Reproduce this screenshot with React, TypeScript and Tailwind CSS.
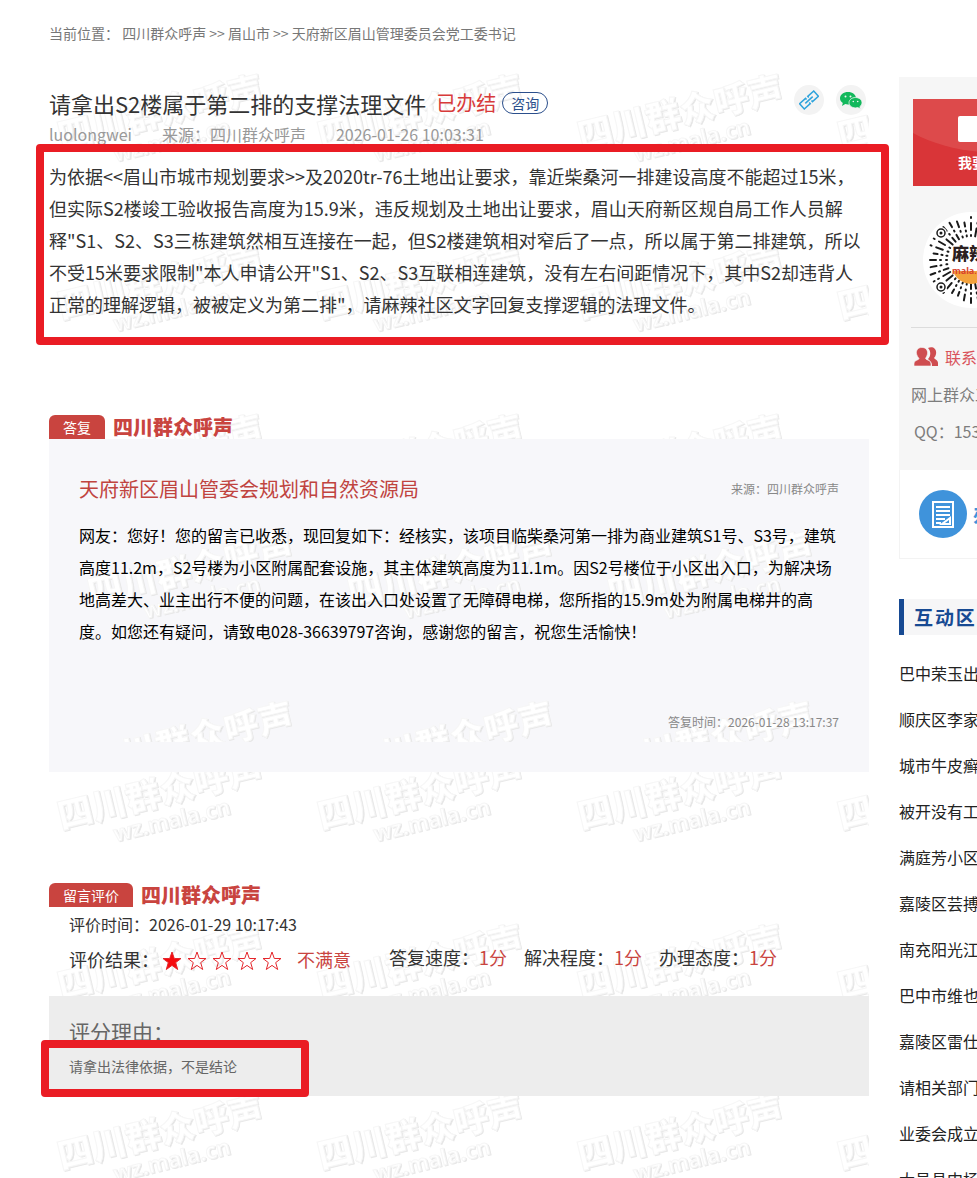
import { useId } from "react";

const TOPICS = [
  "巴中荣玉出",
  "顺庆区李家",
  "城市牛皮癣",
  "被开没有工",
  "满庭芳小区",
  "嘉陵区芸搏",
  "南充阳光江",
  "巴中市维也",
  "嘉陵区雷仕",
  "请相关部门",
  "业委会成立",
  "大邑县中杨",
];

const SCORES = [
  { label: "答复速度：", value: "1分" },
  { label: "解决程度：", value: "1分" },
  { label: "办理态度：", value: "1分" },
];

const STAR = "M10 1l2.300 6.500h6.700l-5.300 4.100 2 6.900-5.700-4.100-5.700 4.100 2-6.900L1 7.500h6.700z";

function Watermark() {
  const id = useId();
  const word = (fill: string, stroke: string) => (
    <g fill={fill} stroke={stroke}>
      <text x="0" y="0" fontSize="35" fontWeight="900">
        四川群众呼声
      </text>
      <text x="50" y="25" fontSize="22" fontWeight="600" fontFamily="Noto Sans">
        wz.mala.cn
      </text>
    </g>
  );

  return (
    <svg className="pointer-events-none absolute inset-0 h-full w-full" aria-hidden="true">
      <defs>
        <pattern id={id} width="260" height="170" patternUnits="userSpaceOnUse">
          <g transform="translate(12 87) rotate(-13.5)" strokeWidth="1">
            <g transform="translate(1 1)">{word("#dcdcdc", "#e8e8e8")}</g>
            {word("#fff", "#f6f6f6")}
          </g>
        </pattern>
      </defs>
      <rect width="100%" height="100%" fill={`url(#${id})`} />
    </svg>
  );
}

function SectionTab({ title }: { title: string }) {
  return (
    <div className="flex items-center gap-2">
      <h2 className="rounded-t-md bg-[#c9443f] px-3.5 text-sm leading-6 text-white">{title}</h2>
      <span className="text-xl leading-6 font-black text-[#c9443f]">四川群众呼声</span>
    </div>
  );
}

function Stars({ score }: { score: number }) {
  return (
    <div className="flex gap-[5px]" role="img" aria-label={`${score} / 5`}>
      {[1, 2, 3, 4, 5].map((n) => (
        <svg key={n} viewBox="0 0 20 20" className="h-5 w-5">
          <path d={STAR} fill={n <= score ? "#f5090c" : "none"} stroke="#e5262b" strokeWidth="1" />
        </svg>
      ))}
    </div>
  );
}

// round mini-program code: rays of short dashes around the logo
function RoundCode() {
  const rays = Array.from({ length: 36 }, (_, i) => i);
  const dashes = ["1 5 7 5 1 9", "5 4 1 4 9 9", "1 4 1 4 4 9", "8 5 1 4 1 9", "1 5 1 4 6 9"];
  return (
    <svg viewBox="0 0 96 96" className="h-24 w-24" role="img" aria-label="麻辣社区">
      <circle cx="48" cy="48" r="48" fill="#fff" />
      <g stroke="#1a1a1a" strokeWidth="2" strokeLinecap="round">
        {rays.map((i) => (
          <line
            key={i}
            x1="48"
            y1="24"
            x2="48"
            y2="5"
            strokeDasharray={dashes[(i * 7 + (i % 3)) % 5]}
            transform={`rotate(${i * 10} 48 48)`}
          />
        ))}
      </g>
      {[
        [18, 21],
        [18, 75],
        [78, 21],
      ].map(([x, y]) => (
        <g key={`${x}-${y}`}>
          <circle cx={x} cy={y} r="6" fill="#fff" />
          <circle cx={x} cy={y} r="4" fill="none" stroke="#1a1a1a" strokeWidth="1.5" />
          <circle cx={x} cy={y} r="1.500" fill="#1a1a1a" />
        </g>
      ))}
      <circle cx="48" cy="48" r="21" fill="#fff" />
      <path d="M30 59h36a19 19 0 0 1-36 0z" fill="#f3a23c" />
      <text x="29" y="48" fontSize="17" fontWeight="900" fill="#2b2020">
        麻辣
      </text>
      <text x="29" y="62" fontSize="9" fontWeight="700" fontFamily="Noto Sans" fill="#d8432f">
        mala.cn
      </text>
    </svg>
  );
}

function WechatIcon() {
  return (
    <svg viewBox="0 0 24 20" className="h-5 w-6" aria-hidden="true">
      <path d="M9 2c4.500 0 8 2.700 8 6.200S13.500 14.500 9 14.500c-1 0-1.900-.1-2.700-.4L3 16l.8-3C2.100 11.900 1 10.200 1 8.200 1 4.700 4.600 2 9 2z" fill="#12b85c" />
      <path d="M16.500 7.500c3.700 0 6.500 2.300 6.500 5.200 0 1.600-.9 3-2.200 4l.6 2.300-2.500-1.400c-.8.2-1.600.3-2.400.3-3.700 0-6.500-2.300-6.500-5.200s2.800-5.200 6.500-5.200z" fill="#12b85c" stroke="#f3f3f3" strokeWidth=".8" />
      <g fill="#f3f3f3">
        <circle cx="6.500" cy="6.500" r="1" />
        <circle cx="11.500" cy="6.500" r="1" />
        <circle cx="14.300" cy="11.500" r=".8" />
        <circle cx="18.700" cy="11.500" r=".8" />
      </g>
    </svg>
  );
}

function Sidebar() {
  return (
    <aside className="w-[78px] flex-none overflow-hidden pt-[15px] whitespace-nowrap">
      <div className="h-[393px] bg-[#f6f6f6] pt-[22px]">
        <a href="#write" className="relative ml-3.5 block h-[87px] w-[140px] overflow-hidden bg-[#d93538] text-white">
          <svg viewBox="0 0 140 87" className="absolute inset-0 h-full w-full" aria-hidden="true">
            <path d="M0 0h140v48C95 58 40 56 0 34z" fill="#dd4a4b" />
            <rect x="45" y="17" width="50" height="26" rx="2" fill="#fff" />
          </svg>
          <span className="relative block pt-[53px] pl-[45px] text-sm leading-5 font-bold">我要留言</span>
        </a>
        <div className="mt-[26px] ml-6 w-24">
          <RoundCode />
        </div>
        <div className="mt-[19px] ml-3 border-t border-[#dcdcdc] pt-[17px]">
          <h3 className="flex items-center gap-[7px] pl-[3px] leading-6 text-[#d9535a]">
            <svg viewBox="0 0 24 20" className="h-5 w-6 flex-none" fill="#cf4d50" aria-hidden="true">
              <path d="M14 1c5-2 9 1 8 6-.3 2-1.300 3-2 4 1 1.500 4 2 4 5v3h-6c0-4-2-5-4-7 3-3 3-8 0-11z" />
              <path
                d="M8 .5c4 0 6 3 5.500 6.500C13.200 9 12 10 11.500 11.500c1 2 5.500 1.500 5.500 5.500v2H0v-2c0-4 4.500-3.500 5-5.500C4 10 3 9 2.500 7 2 3 4 .500 8 .500z"
                stroke="#f6f6f6"
                strokeWidth=".6"
              />
            </svg>
            联系我们
          </h3>
          <p className="mt-[13px] leading-6 text-[#7d7d7d]">网上群众工作</p>
          <p className="mt-[13px] pl-[3px] leading-6 text-[#7d7d7d]">QQ：1534</p>
        </div>
      </div>
      <a href="#guide" className="flex h-[89px] items-center gap-1.5 border-b border-l border-[#f3f3f3] pl-[19px] text-xl font-bold text-[#3f93db]">
        <svg viewBox="0 0 48 48" className="h-12 w-12 flex-none" aria-hidden="true">
          <circle cx="24" cy="24" r="24" fill="#3f93db" />
          <g fill="none" stroke="#fff" strokeWidth="2">
            <path d="M14 12h20v25H14z" />
            <path d="M17 17h14M17 21h14M17 25h14M17 29h9M17 33h5M31 28l-8 6h8z" />
          </g>
        </svg>
        办事
      </a>
      <h2 className="mt-10 border-l-[5px] border-[#174a93] bg-[#f6f6f7] pl-2.5 text-[19px] leading-9 font-bold tracking-widest text-[#174a93]">
        互动区
      </h2>
      <ul className="mt-[15px] text-[#222]">
        {TOPICS.map((topic) => (
          <li key={topic}>
            <a href="#topic" className="block leading-[46px]">
              {topic}
            </a>
          </li>
        ))}
      </ul>
    </aside>
  );
}

export default function App() {
  return (
    <div className="h-screen overflow-hidden bg-white pl-[49px] font-['Noto_Sans_CJK_SC',sans-serif] text-base text-[#333]">
      <nav className="h-[62px] pt-[21px] text-sm leading-6 text-[#777]">
        当前位置： <a href="#home">四川群众呼声</a> &gt;&gt; <a href="#city">眉山市</a> &gt;&gt;{" "}
        <a href="#dept">天府新区眉山管理委员会党工委书记</a>
      </nav>

      <div className="flex gap-[30px]">
        <main className="relative min-h-[1116px] min-w-0 flex-1 pt-[25px]">
          <Watermark />
          <div className="relative">
            <header>
              <div className="flex h-8 items-center">
                <h1 className="text-[22px] leading-8">请拿出S2楼属于第二排的支撑法理文件</h1>
                <span className="ml-2.5 text-xl text-[#d83a3a]">已办结</span>
                <span className="ml-1.5 rounded-full border border-[#2b4f8c] px-2 text-sm leading-5 text-[#2b4f8c]">
                  咨询
                </span>
                <div className="mr-[3px] mb-1.5 ml-auto flex gap-3">
                  <button aria-label="复制链接" className="flex h-[30px] w-[30px] items-center justify-center rounded-full bg-[#f3f3f3]">
                    <svg viewBox="0 0 20 20" className="h-5 w-5" fill="none" stroke="#2ea3dc" strokeWidth="1.5">
                      <g transform="rotate(-42 10 10)">
                        <path d="M8.500 8V6.500H.5v7h8V12" />
                        <path d="M11.500 8V6.500h8v7h-8V12" />
                        <path d="M5 10h10" />
                      </g>
                    </svg>
                  </button>
                  <button aria-label="分享到微信" className="flex h-[30px] w-[30px] items-center justify-center rounded-full bg-[#f3f3f3]">
                    <WechatIcon />
                  </button>
                </div>
              </div>
              <p className="flex gap-[30px] leading-[30px] text-[#999]">
                <span>luolongwei</span>
                <span>来源：四川群众呼声</span>
                <span>2026-01-26 10:03:31</span>
              </p>
            </header>

            <div className="relative mt-[11px]">
              <p className="text-lg leading-8">
                为依据&lt;&lt;眉山市城市规划要求&gt;&gt;及2020tr-76土地出让要求，靠近柴桑河一排建设高度不能超过15米，但实际S2楼竣工验收报告高度为15.9米，违反规划及土地出让要求，眉山天府新区规自局工作人员解释"S1、S2、S3三栋建筑然相互连接在一起，但S2楼建筑相对窄后了一点，所以属于第二排建筑，所以不受15米要求限制"本人申请公开"S1、S2、S3互联相连建筑，没有左右间距情况下，其中S2却违背人正常的理解逻辑，被被定义为第二排"，请麻辣社区文字回复支撑逻辑的法理文件。
              </p>
              <div className="pointer-events-none absolute -top-4 -right-5 -bottom-[25px] -left-[13px] rounded border-8 border-[#ea1c24]" />
            </div>

            <section className="mt-[95px]">
              <SectionTab title="答复" />
              <div className="bg-[#f7f7fa] px-[30px] pt-[34px] pb-[30px]">
                <div className="flex items-center justify-between">
                  <h3 className="text-xl leading-8 text-[#c0443f]">天府新区眉山管委会规划和自然资源局</h3>
                  <span className="text-xs text-[#888]">来源：四川群众呼声</span>
                </div>
                <div className="relative mt-3.5 flex min-h-[223px] flex-col justify-between">
                  <Watermark />
                  <p className="relative leading-8 text-black">
                    网友：您好！您的留言已收悉，现回复如下：经核实，该项目临柴桑河第一排为商业建筑S1号、S3号，建筑高度11.2m，S2号楼为小区附属配套设施，其主体建筑高度为11.1m。因S2号楼位于小区出入口，为解决场地高差大、业主出行不便的问题，在该出入口处设置了无障碍电梯，您所指的15.9m处为附属电梯井的高度。如您还有疑问，请致电028-36639797咨询，感谢您的留言，祝您生活愉快！
                  </p>
                  <p className="relative text-right text-xs leading-10 text-[#888]">答复时间：2026-01-28 13:17:37</p>
                </div>
              </div>
            </section>

            <section className="mt-[111px]">
              <SectionTab title="留言评价" />
              <p className="pl-5 leading-[34px]">评价时间：2026-01-29 10:17:43</p>
              <div className="flex items-center pl-5 text-lg leading-8">
                <span>评价结果：</span>
                <div className="mt-1 ml-[3px]">
                  <Stars score={1} />
                </div>
                <span className="ml-[15px] text-[#c9443f]">不满意</span>
                <dl className="mb-1 ml-[38px] flex gap-[17px]">
                  {SCORES.map((s) => (
                    <div key={s.label} className="flex">
                      <dt>{s.label}</dt>
                      <dd className="text-[#c9443f]">{s.value}</dd>
                    </div>
                  ))}
                </dl>
              </div>
              <div className="mt-[19px] h-[100px] bg-[#ededed] px-5 pt-[19px] text-[#666]">
                <h3 className="text-[21px] leading-8">评分理由：</h3>
                <div className="relative mt-[7px]">
                  <p className="text-sm leading-6">请拿出法律依据，不是结论</p>
                  <div className="pointer-events-none absolute -top-3.5 -bottom-[19px] -left-7 w-[268px] rounded border-8 border-[#ea1c24]" />
                </div>
              </div>
            </section>
          </div>
        </main>

        <Sidebar />
      </div>
    </div>
  );
}
